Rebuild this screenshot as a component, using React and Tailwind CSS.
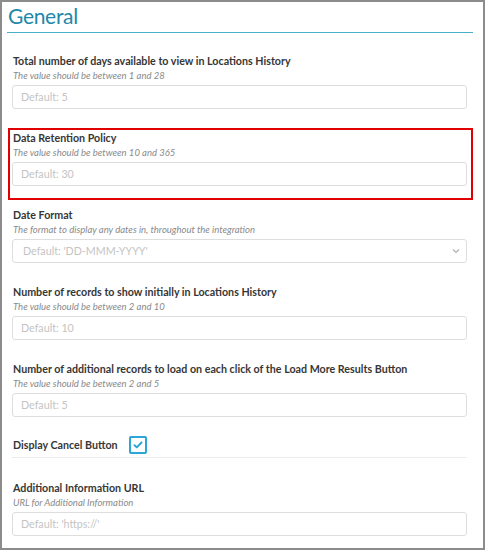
import React from 'react';

const font = { fontFamily: 'Lato, "Open Sans", sans-serif' };

function Field({ label, help, placeholder, select = false, highlight = false }) {
    return (
        <div className={`ml-[6px] mb-[5px] w-[465px] border-2 px-[2px] pb-[12px] ${highlight ? 'border-[#e00000]' : 'border-transparent'}`}>
            <div className="pl-[1px] text-[10.7px] font-bold leading-[16px] text-[#363636]">{label}</div>
            <div className="pl-[1px] text-[9.5px] italic leading-[14px] text-[#8a8a8a]">{help}</div>
            <div className="mt-[2px] flex h-[24px] w-[455px] items-center justify-between rounded-[3px] border border-[#dedede] bg-white pl-[8px] pr-[6px]">
                <span className={`text-[10.7px] text-[#c4c4c4] ${select ? 'pl-[2px]' : ''}`}>{placeholder}</span>
                {select && (
                    <svg width="8" height="6" viewBox="0 0 8 6" fill="none" stroke="#b0b0b0" strokeWidth="1.2">
                        <path d="M1 1.5l3 3 3-3" />
                    </svg>
                )}
            </div>
        </div>
    );
}

export default function App() {
    return (
        <div className="h-[550px] w-[485px] overflow-hidden border-2 border-[#8c8c8c] bg-white" style={font}>
            {/* Heading */}
            <div className="ml-[5px] mb-[18px] w-[466px] border-b-[1.5px] border-[#4aaecb] pb-[2px]">
                <h1 className="pl-[1px] text-[21px] leading-[28px] tracking-[-0.3px] text-[#2288aa]">General</h1>
            </div>

            <Field
                label="Total number of days available to view in Locations History"
                help="The value should be between 1 and 28"
                placeholder="Default: 5"
            />
            <Field
                label="Data Retention Policy"
                help="The value should be between 10 and 365"
                placeholder="Default: 30"
                highlight
            />
            <Field
                label="Date Format"
                help="The format to display any dates in, throughout the integration"
                placeholder="Default: 'DD-MMM-YYYY'"
                select
            />
            <Field
                label="Number of records to show initially in Locations History"
                help="The value should be between 2 and 10"
                placeholder="Default: 10"
            />
            <Field
                label="Number of additional records to load on each click of the Load More Results Button"
                help="The value should be between 2 and 5"
                placeholder="Default: 5"
            />

            {/* Checkbox row */}
            <div className="-mt-[3px] ml-[6px] mb-[18px] w-[465px] border-2 border-transparent px-[2px]">
                <div className="flex h-[20px] items-center gap-[11px]">
                    <span className="pl-[1px] text-[10.7px] font-bold text-[#363636]">Display Cancel Button</span>
                    <span className="flex h-[18px] w-[18px] items-center justify-center rounded-[2px] border-2 border-[#2ba6d6]">
                        <svg width="10" height="8" viewBox="0 0 10 8" fill="none" stroke="#2ba6d6" strokeWidth="2" strokeLinecap="round" strokeLinejoin="round">
                            <path d="M1.5 4.2l2.3 2.2L8.5 1.5" />
                        </svg>
                    </span>
                </div>
                <div className="mt-[2px] w-[455px] border-t border-[#ececec]" />
            </div>

            <Field
                label="Additional Information URL"
                help="URL for Additional Information"
                placeholder="Default: 'https://'"
            />
        </div>
    );
}
